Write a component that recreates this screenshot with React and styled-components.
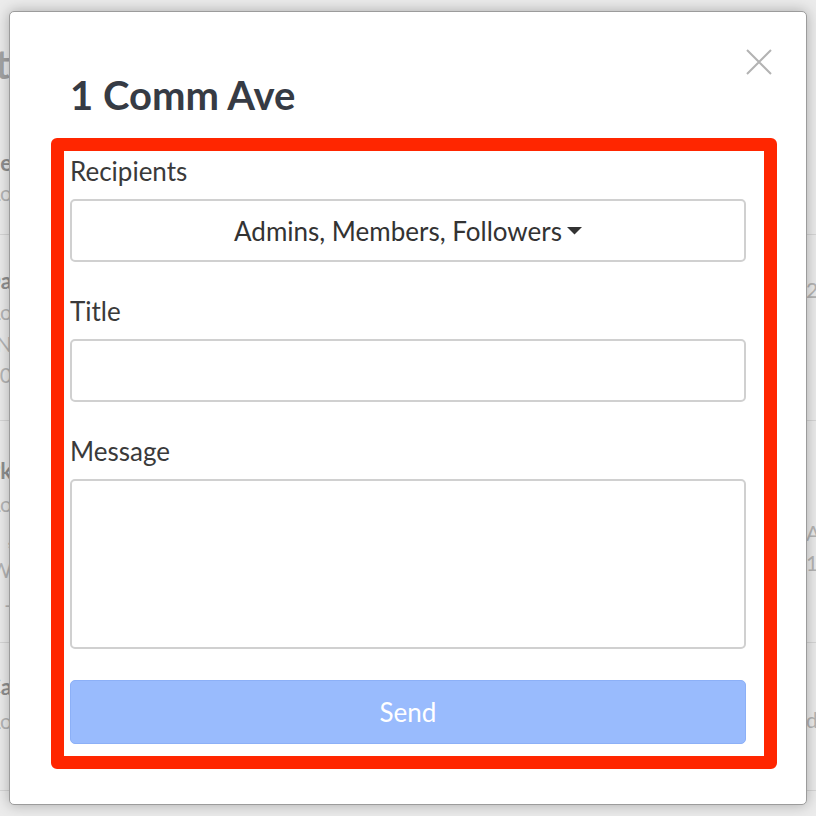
import React from "react";
import styled, { createGlobalStyle } from "styled-components";

const GlobalStyle = createGlobalStyle`
  html, body { margin: 0; padding: 0; }
  body {
    font-family: Lato, "Open Sans", "Liberation Sans", sans-serif;
    background: #ebebeb;
    overflow: hidden;
  }
  * { box-sizing: border-box; }
`;

const Page = styled.div`
  position: relative;
  width: 816px;
  height: 816px;
  overflow: hidden;
  background: #ebebeb;
`;

const Backdrop = styled.div`
  display: flex;
  flex-direction: column;
  margin: 0 -30px;
`;

const BackHeading = styled.div`
  height: 130px;
  display: flex;
  align-items: center;
  width: 40px;
  justify-content: flex-end;
  font-size: 40px;
  font-weight: 700;
  color: #a3a3a3;
  white-space: nowrap;
  padding-bottom: 2px;
`;

const BackRow = styled.div`
  display: flex;
  justify-content: space-between;
  height: ${(p) => p.$h}px;
  border-bottom: ${(p) => (p.$line ? "1px solid #d5d5d5" : "none")};
`;

const LeftCell = styled.div`
  width: 42px;
  padding-top: ${(p) => p.$pt}px;
  display: flex;
  flex-direction: column;
  align-items: flex-end;
  white-space: nowrap;
`;

const RightCell = styled.div`
  width: 40px;
  padding-top: ${(p) => p.$pt}px;
  display: flex;
  flex-direction: column;
  white-space: nowrap;
`;

const BackLine = styled.div`
  font-size: ${(p) => (p.$strong ? 22 : 21)}px;
  line-height: ${(p) => p.$lh || 30}px;
  font-weight: ${(p) => (p.$strong ? 700 : 400)};
  color: ${(p) => (p.$strong ? "#8f8f8f" : "#b4b4b4")};
`;

const Modal = styled.div`
  position: absolute;
  left: 9px;
  top: 11px;
  width: 798px;
  height: 794px;
  background: #ffffff;
  border: 1px solid #9c9c9c;
  border-radius: 5px;
  box-shadow: 0 0 14px rgba(0, 0, 0, 0.28);
  display: flex;
  flex-direction: column;
`;

const Header = styled.div`
  display: flex;
  justify-content: space-between;
  align-items: flex-start;
  padding: 37px 34px 0 60px;
`;

const Title = styled.h1`
  margin: 22px 0 0 0;
  font-size: 40px;
  line-height: 48px;
  font-weight: 700;
  color: #363b44;
`;

const CloseButton = styled.button`
  margin-top: 0;
  width: 26px;
  height: 26px;
  padding: 0;
  border: none;
  background: transparent;
  display: flex;
  cursor: pointer;
`;

const Highlight = styled.div`
  margin: 19px 29px 0 41px;
  border: 13px solid #ff2600;
  border-radius: 6px;
  padding: 6px 18px 12px 6px;
  display: flex;
  flex-direction: column;
`;

const Field = styled.div`
  display: flex;
  flex-direction: column;
  margin-bottom: ${(p) => p.$mb}px;
`;

const Label = styled.label`
  font-size: 26px;
  line-height: 28px;
  color: #3a3a3a;
  margin-bottom: 14px;
`;

const inputBox = `
  width: 100%;
  border: 2px solid #d0d0d0;
  border-radius: 5px;
  background: #fff;
  font-family: Lato, "Open Sans", sans-serif;
  font-size: 26px;
  color: #333;
`;

const Dropdown = styled.button`
  ${inputBox}
  height: 63px;
  display: flex;
  align-items: center;
  justify-content: center;
  gap: 5px;
  padding: 1px 0 0 0;
  cursor: pointer;
`;

const TextInput = styled.input`
  ${inputBox}
  height: 63px;
  padding: 0 12px;
  outline: none;
`;

const TextArea = styled.textarea`
  ${inputBox}
  height: 170px;
  padding: 12px;
  resize: none;
  outline: none;
  display: block;
`;

const SendButton = styled.button`
  height: 64px;
  width: 100%;
  background: #99bbfd;
  border: 1px solid #8cb0f7;
  border-radius: 5px;
  color: #ffffff;
  font-family: Lato, "Open Sans", sans-serif;
  font-size: 26px;
  padding: 0;
`;

export default function App() {
  return (
    <Page>
      <GlobalStyle />
      <Backdrop>
        <BackHeading>Event</BackHeading>
        <BackRow $h={105} $line>
          <LeftCell $pt={18}>
            <BackLine $strong>Name</BackLine>
            <BackLine>Lo</BackLine>
          </LeftCell>
          <RightCell $pt={0} />
        </BackRow>
        <BackRow $h={186} $line>
          <LeftCell $pt={30}>
            <BackLine $strong $lh={31}>Oa</BackLine>
            <BackLine $lh={31}>Lo</BackLine>
            <BackLine $lh={34}>N</BackLine>
            <BackLine $lh={28}>0</BackLine>
          </LeftCell>
          <RightCell $pt={40}>
            <BackLine>2</BackLine>
          </RightCell>
        </BackRow>
        <BackRow $h={222} $line>
          <LeftCell $pt={34}>
            <BackLine $strong $lh={31}>Pk</BackLine>
            <BackLine $lh={36}>Lo</BackLine>
            <BackLine $lh={30}>,</BackLine>
            <BackLine $lh={36}>W</BackLine>
            <BackLine $lh={34}>-</BackLine>
          </LeftCell>
          <RightCell $pt={97}>
            <BackLine>A</BackLine>
            <BackLine>1</BackLine>
          </RightCell>
        </BackRow>
        <BackRow $h={148} $line>
          <LeftCell $pt={27}>
            <BackLine $strong $lh={34}>Ca</BackLine>
            <BackLine $lh={34}>Lo</BackLine>
          </LeftCell>
          <RightCell $pt={62}>
            <BackLine>dr</BackLine>
          </RightCell>
        </BackRow>
      </Backdrop>

      <Modal>
        <Header>
          <Title>1 Comm Ave</Title>
          <CloseButton aria-label="Close">
            <svg width="26" height="26" viewBox="0 0 26 26">
              <path d="M1 1 L25 25 M25 1 L1 25" stroke="#b3b3b3" strokeWidth="2" fill="none" />
            </svg>
          </CloseButton>
        </Header>
        <Highlight>
          <Field $mb={35}>
            <Label>Recipients</Label>
            <Dropdown>
              <span>Admins, Members, Followers</span>
              <svg width="15" height="8" viewBox="0 0 15 8">
                <path d="M0 0 L15 0 L7.5 7.5 Z" fill="#333" />
              </svg>
            </Dropdown>
          </Field>
          <Field $mb={35}>
            <Label>Title</Label>
            <TextInput type="text" />
          </Field>
          <Field $mb={31}>
            <Label>Message</Label>
            <TextArea />
          </Field>
          <SendButton>Send</SendButton>
        </Highlight>
      </Modal>
    </Page>
  );
}
